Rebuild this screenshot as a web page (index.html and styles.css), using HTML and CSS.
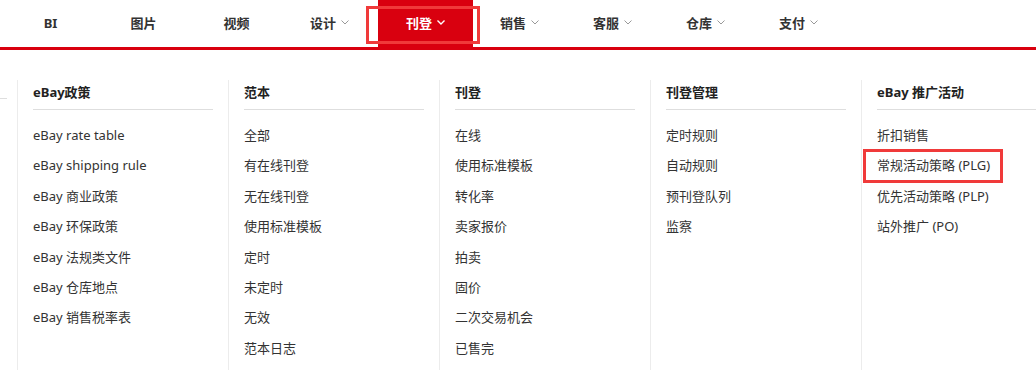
FILE: index.html
```html
<!DOCTYPE html>
<html lang="zh-CN">
<head>
    <meta charset="UTF-8">
    <meta name="viewport" content="width=device-width, initial-scale=1.0">
    <title>刊登菜单</title>
    <link rel="stylesheet" href="styles.css">
</head>
<body>

    <nav class="topnav">
        <a class="nav-item">BI</a>
        <a class="nav-item">图片</a>
        <a class="nav-item">视频</a>
        <a class="nav-item">设计<svg class="caret" viewBox="0 0 8 5"><path d="M0.5 0.5 L4 4 L7.5 0.5"/></svg></a>
        <a class="nav-item active">刊登<svg class="caret" viewBox="0 0 8 5"><path d="M0.5 0.5 L4 4 L7.5 0.5"/></svg><span class="mark mark-nav"></span></a>
        <a class="nav-item">销售<svg class="caret" viewBox="0 0 8 5"><path d="M0.5 0.5 L4 4 L7.5 0.5"/></svg></a>
        <a class="nav-item">客服<svg class="caret" viewBox="0 0 8 5"><path d="M0.5 0.5 L4 4 L7.5 0.5"/></svg></a>
        <a class="nav-item">仓库<svg class="caret" viewBox="0 0 8 5"><path d="M0.5 0.5 L4 4 L7.5 0.5"/></svg></a>
        <a class="nav-item">支付<svg class="caret" viewBox="0 0 8 5"><path d="M0.5 0.5 L4 4 L7.5 0.5"/></svg></a>
    </nav>

    <div class="dropdown">
        <div class="col col-hidden">
            <h4 class="col-title">&nbsp;</h4>
        </div>

        <div class="col">
            <h4 class="col-title">eBay政策</h4>
            <ul class="links">
                <li>eBay rate table</li>
                <li>eBay shipping rule</li>
                <li>eBay 商业政策</li>
                <li>eBay 环保政策</li>
                <li>eBay 法规类文件</li>
                <li>eBay 仓库地点</li>
                <li>eBay 销售税率表</li>
            </ul>
        </div>

        <div class="col">
            <h4 class="col-title">范本</h4>
            <ul class="links">
                <li>全部</li>
                <li>有在线刊登</li>
                <li>无在线刊登</li>
                <li>使用标准模板</li>
                <li>定时</li>
                <li>未定时</li>
                <li>无效</li>
                <li>范本日志</li>
            </ul>
        </div>

        <div class="col">
            <h4 class="col-title">刊登</h4>
            <ul class="links">
                <li>在线</li>
                <li>使用标准模板</li>
                <li>转化率</li>
                <li>卖家报价</li>
                <li>拍卖</li>
                <li>固价</li>
                <li>二次交易机会</li>
                <li>已售完</li>
            </ul>
        </div>

        <div class="col">
            <h4 class="col-title">刊登管理</h4>
            <ul class="links">
                <li>定时规则</li>
                <li>自动规则</li>
                <li>预刊登队列</li>
                <li>监察</li>
            </ul>
        </div>

        <div class="col">
            <h4 class="col-title">eBay 推广活动</h4>
            <ul class="links">
                <li>折扣销售</li>
                <li class="marked">常规活动策略 (PLG)<span class="mark mark-link"></span></li>
                <li>优先活动策略 (PLP)</li>
                <li>站外推广 (PO)</li>
            </ul>
        </div>
    </div>

</body>
</html>
```

FILE: styles.css
```css
/* base */
* {
    margin: 0;
    padding: 0;
    box-sizing: border-box;
}

body {
    width: 1036px;
    height: 370px;
    overflow: hidden;
    background: #fff;
    font-family: "Noto Sans", "Noto Sans CJK SC", sans-serif;
    font-size: 13px;
    color: #333;
}

/* top navigation */
.topnav {
    display: flex;
    height: 50px;
    padding-left: 4px;
    border-bottom: 3px solid #d9000f;
}

.nav-item {
    position: relative;
    width: 93px;
    height: 47px;
    display: flex;
    align-items: center;
    justify-content: center;
    padding-bottom: 2px;
    font-weight: bold;
    color: #333;
    cursor: pointer;
}

.nav-item.active {
    width: 95px;
    margin-left: 2px;
    background: #d9000f;
    color: #fff;
}

.caret {
    width: 8px;
    height: 5px;
    margin-left: 5px;
    fill: none;
    stroke: #999;
    stroke-width: 1;
}

.active .caret {
    stroke: #fff;
    stroke-width: 1.4;
}

/* red annotation boxes */
.mark {
    position: absolute;
    border: 3px solid #f03a3a;
    pointer-events: none;
}

.mark-nav {
    left: -12px;
    top: 6px;
    width: 114px;
    height: 38px;
}

.mark-link {
    left: -14px;
    top: -1px;
    width: 140px;
    height: 34px;
}

/* dropdown columns */
.dropdown {
    display: flex;
    padding-top: 30px;
}

.col {
    flex: 0 0 211px;
    height: 290px;
    padding: 0 15px;
    border-left: 1px solid #ececec;
}

.col-hidden {
    margin-left: -194px;
    padding-right: 10px;
    border-left: none;
}

.col-hidden .col-title {
    height: 19px;
    padding: 0;
}

.col-title {
    height: 30px;
    line-height: 24px;
    padding-bottom: 5px;
    border-bottom: 1px solid #dedede;
    font-size: 13px;
    font-weight: bold;
    color: #222;
    white-space: nowrap;
}

.links {
    list-style: none;
    padding-top: 10px;
}

.links li {
    position: relative;
    line-height: 30.4px;
    white-space: nowrap;
    color: #333;
}
```
